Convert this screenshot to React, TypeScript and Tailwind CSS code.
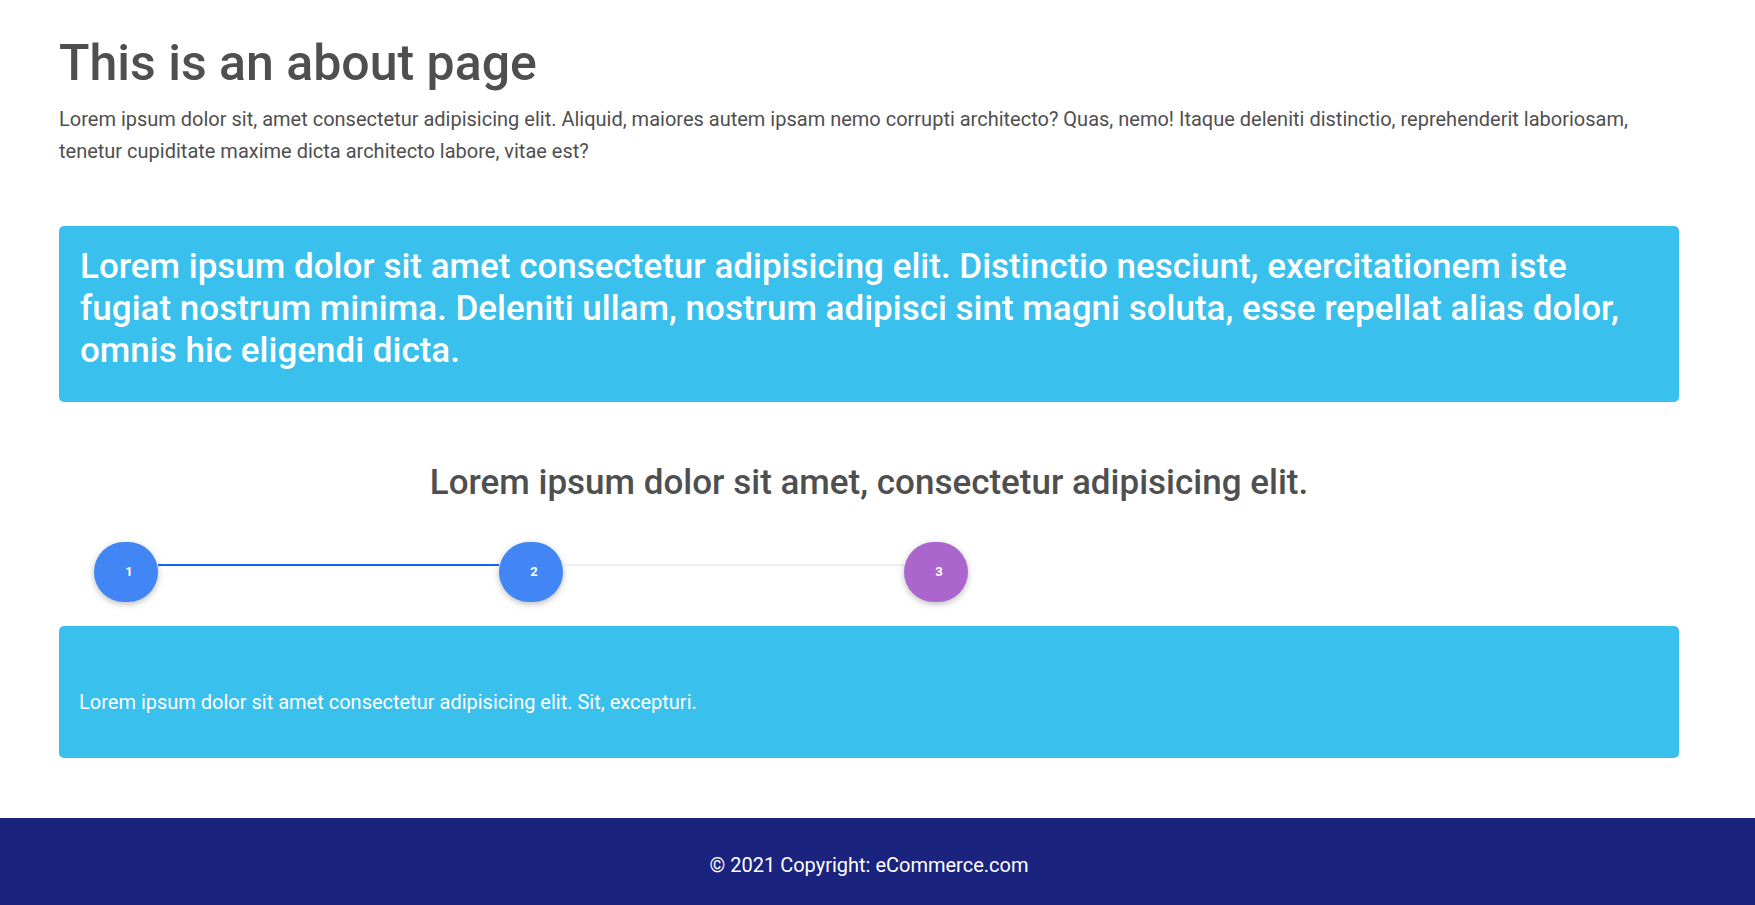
import React from "react";

export default function App() {
  return (
    <div
      className="min-h-screen flex flex-col bg-white text-[#4f4f4f]"
      style={{ fontFamily: "Roboto, 'Noto Sans', sans-serif" }}
    >
      <div className="w-[1738px]">
        <main className="mx-auto w-[1620px] pt-[33px]">
          <h1 className="text-[50px] leading-[60px] font-medium mb-[10px]">
            This is an about page
          </h1>
          <p className="text-[20px] leading-[32px] mb-[59px]">
            Lorem ipsum dolor sit, amet consectetur adipisicing elit. Aliquid, maiores autem ipsam nemo corrupti architecto? Quas, nemo! Itaque deleniti distinctio, reprehenderit laboriosam, tenetur cupiditate maxime dicta architecto labore, vitae est?
          </p>

          <section className="bg-[#39c0ed] rounded-[5px] pt-[20px] pb-[20px] px-[21px] text-white">
            <h2 className="text-[35px] leading-[42px] font-medium mb-[10px]">
              Lorem ipsum dolor sit amet consectetur adipisicing elit. Distinctio nesciunt, exercitationem iste fugiat nostrum minima. Deleniti ullam, nostrum adipisci sint magni soluta, esse repellat alias dolor, omnis hic eligendi dicta.
            </h2>
          </section>

          <h3 className="mt-[60px] text-center text-[35px] leading-[42px] font-medium">
            Lorem ipsum dolor sit amet, consectetur adipisicing elit.
          </h3>

          <div className="mt-[38px] flex items-start pl-[35px]">
            <div className="w-[64px] h-[60px] rounded-full bg-[#4285f4] text-white text-[13px] font-bold flex items-center justify-center pl-[6px] shadow-[0_2px_5px_0_rgba(0,0,0,0.16),0_2px_10px_0_rgba(0,0,0,0.12)]">
              1
            </div>
            <div className="w-[341px] h-[2px] mt-[22px] bg-[#1266f1]" />
            <div className="w-[64px] h-[60px] rounded-full bg-[#4285f4] text-white text-[13px] font-bold flex items-center justify-center pl-[6px] shadow-[0_2px_5px_0_rgba(0,0,0,0.16),0_2px_10px_0_rgba(0,0,0,0.12)]">
              2
            </div>
            <div className="w-[341px] h-[2px] mt-[22px] bg-[#eeeeee]" />
            <div className="w-[64px] h-[60px] rounded-full bg-[#aa66cc] text-white text-[13px] font-bold flex items-center justify-center pl-[6px] shadow-[0_2px_5px_0_rgba(0,0,0,0.16),0_2px_10px_0_rgba(0,0,0,0.12)]">
              3
            </div>
          </div>

          <section className="mt-[24px] bg-[#39c0ed] rounded-[5px] pt-[60px] pb-[40px] px-[20px] text-white">
            <p className="text-[20px] leading-[32px]">
              Lorem ipsum dolor sit amet consectetur adipisicing elit. Sit, excepturi.
            </p>
          </section>
        </main>
      </div>

      <footer className="mt-[60px] h-[87px] bg-[#1a237e] text-white pt-[31px] pr-[17px] text-center text-[20px] leading-[32px]">
        © 2021 Copyright: eCommerce.com
      </footer>
    </div>
  );
}
